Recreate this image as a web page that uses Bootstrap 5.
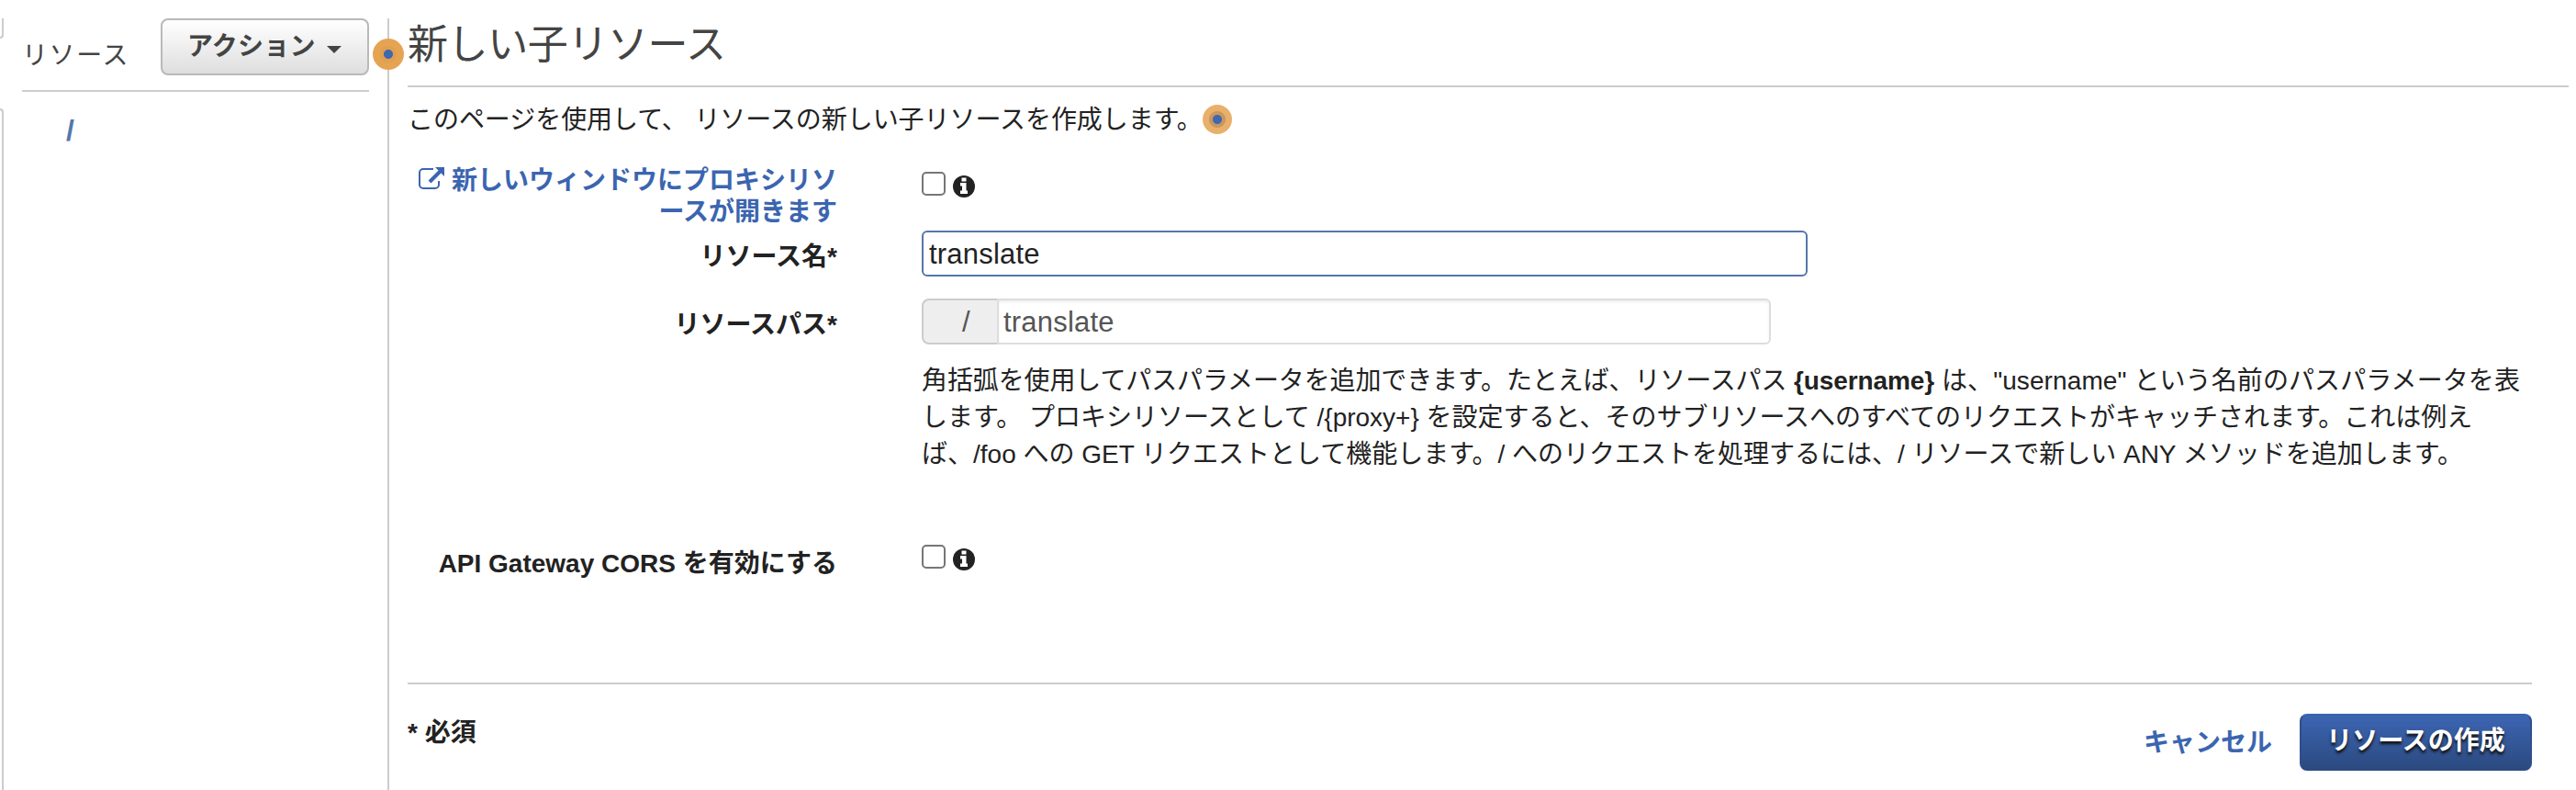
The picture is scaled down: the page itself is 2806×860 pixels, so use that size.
<!DOCTYPE html>
<html lang="ja">
<head>
<meta charset="utf-8">
<title>新しい子リソース</title>
<link rel="stylesheet" href="https://cdn.jsdelivr.net/npm/bootstrap@5.3.0/dist/css/bootstrap.min.css">
<style>
body{font-family:"Liberation Sans","Noto Sans CJK JP",sans-serif;font-size:28px;line-height:34px;color:#222;background:#fff;height:860px;overflow:hidden;white-space:nowrap}
.edge{width:4px;height:860px;flex:none}
.edge-a{height:22px;margin-top:20px;border:2px solid #ccc;border-width:0 2px 2px 0;border-radius:0 0 4px 0}
.edge-b{height:742px;margin-top:76px;border:2px solid #ccc;border-width:2px 2px 0 0;border-radius:0 4px 0 0}
.side{width:420px;height:840px;margin-top:20px;padding-left:20px;padding-right:20px;border-right:2px solid #ccc;flex:none}
.side-head{height:80px;border-bottom:2px solid #ccc;color:#444}
.side-title{margin-top:24px;letter-spacing:1.6px}
.btn-act{width:227px;height:62px;border:2px solid #b9b9b9;border-radius:8px;background:linear-gradient(#fff,#dedede);color:#444;font-size:28px;font-weight:700;line-height:34px;padding:0 28px 0 27px}
.t-act{letter-spacing:.2px}
.caret{width:16px;height:8px;flex:none}
.root-link{color:#5577aa;font-weight:700;font-size:32px;margin:25px 0 0 48px;display:block;text-decoration:none}
.pin{position:absolute;border-radius:50%}
.pin-a{width:34px;height:34px;left:406px;top:42px;background:radial-gradient(circle,#4067b0 4.6px,#dfa050 5.4px,#dfa050 9px,#e6a453 9.6px)}
.pin-b{width:32px;height:32px;left:1310px;top:114px;background:radial-gradient(circle,#4067b0 4.6px,#c9975d 5.4px,#c9975d 8.6px,#e9b06b 9.4px)}
.content{width:2382px;margin-left:20px;flex:none}
h1{font-size:44px;line-height:54px;font-weight:400;color:#444;margin:0;padding-top:22px;height:95px;border-bottom:2px solid #ccc;width:2354px;letter-spacing:-.4px}
.intro{margin:19px 0 0;height:55px;letter-spacing:-.05px}
.rowf{display:flex}
.lab{width:468px;text-align:right;font-weight:700;flex:none;margin-right:92px}
.lab a,.cancel{color:#3b65b0;text-decoration:none;font-weight:700}
.chk{width:26px;height:26px;border:2px solid #767676;border-radius:5px;background:#fff;margin:0;appearance:none;flex:none}
.inf{width:24px;height:24px;margin:4px 0 0 8px;flex:none}
.fld{border:2px solid #5577aa;border-radius:6px;height:50px;padding:2px 6px 0;font-size:31px;letter-spacing:.2px;color:#222;width:965px;font-family:inherit;outline:0;background:#fff}
.addon{width:82px;height:50px;border:2px solid #ccc;border-right:0;border-radius:8px 0 0 8px;background:#eee;color:#555;font-size:31px;line-height:48px;padding-left:42px}
.fld2{width:843px;border-color:#ddd;border-radius:0 6px 6px 0;color:#555;box-shadow:inset 0 2px 3px #eee;padding-left:5px}
.helpt{line-height:40px;padding-top:2px}
.t-1a{letter-spacing:-.11px}
.t-1b{letter-spacing:.1px}
.foot{width:2314px;border-top:2px solid #ccc}
.btn-make{width:253px;height:62px;border:2px solid #2f4f8c;border-top-color:#3b63ad;border-bottom-color:#2b4a80;border-radius:8px;background:linear-gradient(#3c65b2,#2b4a80);color:#fff;font-size:28px;font-weight:700;text-shadow:0 3px 3px #111;padding:0 0 2px;line-height:34px}
</style>
</head>
<body>
<div class="d-flex">
  <div class="edge"><div class="edge-a"></div><div class="edge-b"></div></div>
  <aside class="side">
    <div class="side-head d-flex justify-content-between align-items-start">
      <span class="side-title">リソース</span>
      <button class="btn-act d-flex align-items-center justify-content-between"><span class="t-act">アクション</span><svg class="caret" style="margin-top:6px" viewBox="0 0 16 8"><path d="M0 0h16L8 8z" fill="#444"/></svg></button>
    </div>
    <a class="root-link" href="#">/</a>
  </aside>
  <main class="content">
    <h1>新しい子リソース</h1>
    <p class="intro">このページを使用して、 リソースの新しい子リソースを作成します。</p>
    <div class="rowf" style="height:82px">
      <div class="lab" style="padding-top:11px"><a href="#"><svg width="30" height="26" viewBox="0 0 30 26" style="margin-right:7px;vertical-align:-1px"><path d="M17 3H6a4 4 0 0 0-4 4v13a4 4 0 0 0 4 4h13a4 4 0 0 0 4-4v-4" fill="none" stroke="#3b65b0" stroke-width="2"/><path d="M13 17L25 5" stroke="#3b65b0" stroke-width="4"/><path d="M19 1h10v10z" fill="#3b65b0"/></svg>新しいウィンドウにプロキシリソ<br>ースが開きます</a></div>
      <input type="checkbox" class="chk" style="margin-top:18px"><svg class="inf" style="margin-top:22px" viewBox="0 0 24 24"><circle cx="12" cy="12" r="12" fill="#222"/><path d="M9.500 2.500h5v4h-5zM8 8h6.500v8.500H16V20H8v-3.500h2v-5H8z" fill="#fff"/></svg>
    </div>
    <div class="rowf" style="height:74px"><label class="lab" style="padding-top:12px">リソース名*</label><input class="fld" value="translate"></div>
    <div class="rowf" style="height:68px"><label class="lab" style="padding-top:12px">リソースパス*</label><span class="addon">/</span><input class="fld fld2" value="translate"></div>
    <div class="rowf" style="height:200px"><div class="lab"></div><div class="helpt">
      <span class="t-1a">角括弧を使用してパスパラメータを追加できます。たとえば、リソースパス <b>{username}</b></span><span class="t-1b"> は、"username" という名前のパスパラメータを表</span><br>
      <span>します。 プロキシリソースとして /{proxy+} を設定すると、そのサブリソースへのすべてのリクエストがキャッチされます。これは例え</span><br>
      <span>ば、/foo への GET リクエストとして機能します。/ へのリクエストを処理するには、/ リソースで新しい ANY メソッドを追加します。</span></div></div>
    <div class="rowf" style="height:150px"><label class="lab" style="padding-top:4px">API Gateway CORS を有効にする</label><input type="checkbox" class="chk"><svg class="inf" viewBox="0 0 24 24"><circle cx="12" cy="12" r="12" fill="#222"/><path d="M9.500 2.500h5v4h-5zM8 8h6.500v8.500H16V20H8v-3.500h2v-5H8z" fill="#fff"/></svg></div>
    <div class="foot d-flex justify-content-between"><b style="margin-top:36px">* 必須</b>
      <div class="d-flex" style="margin-top:32px"><a class="cancel" href="#" style="margin:15px 30px 0 0">キャンセル</a><button class="btn-make">リソースの作成</button></div></div>
  </main>
</div>
<span class="pin pin-a"></span><span class="pin pin-b"></span>
<script src="https://cdn.jsdelivr.net/npm/bootstrap@5.3.0/dist/js/bootstrap.bundle.min.js"></script>
</body>
</html>
